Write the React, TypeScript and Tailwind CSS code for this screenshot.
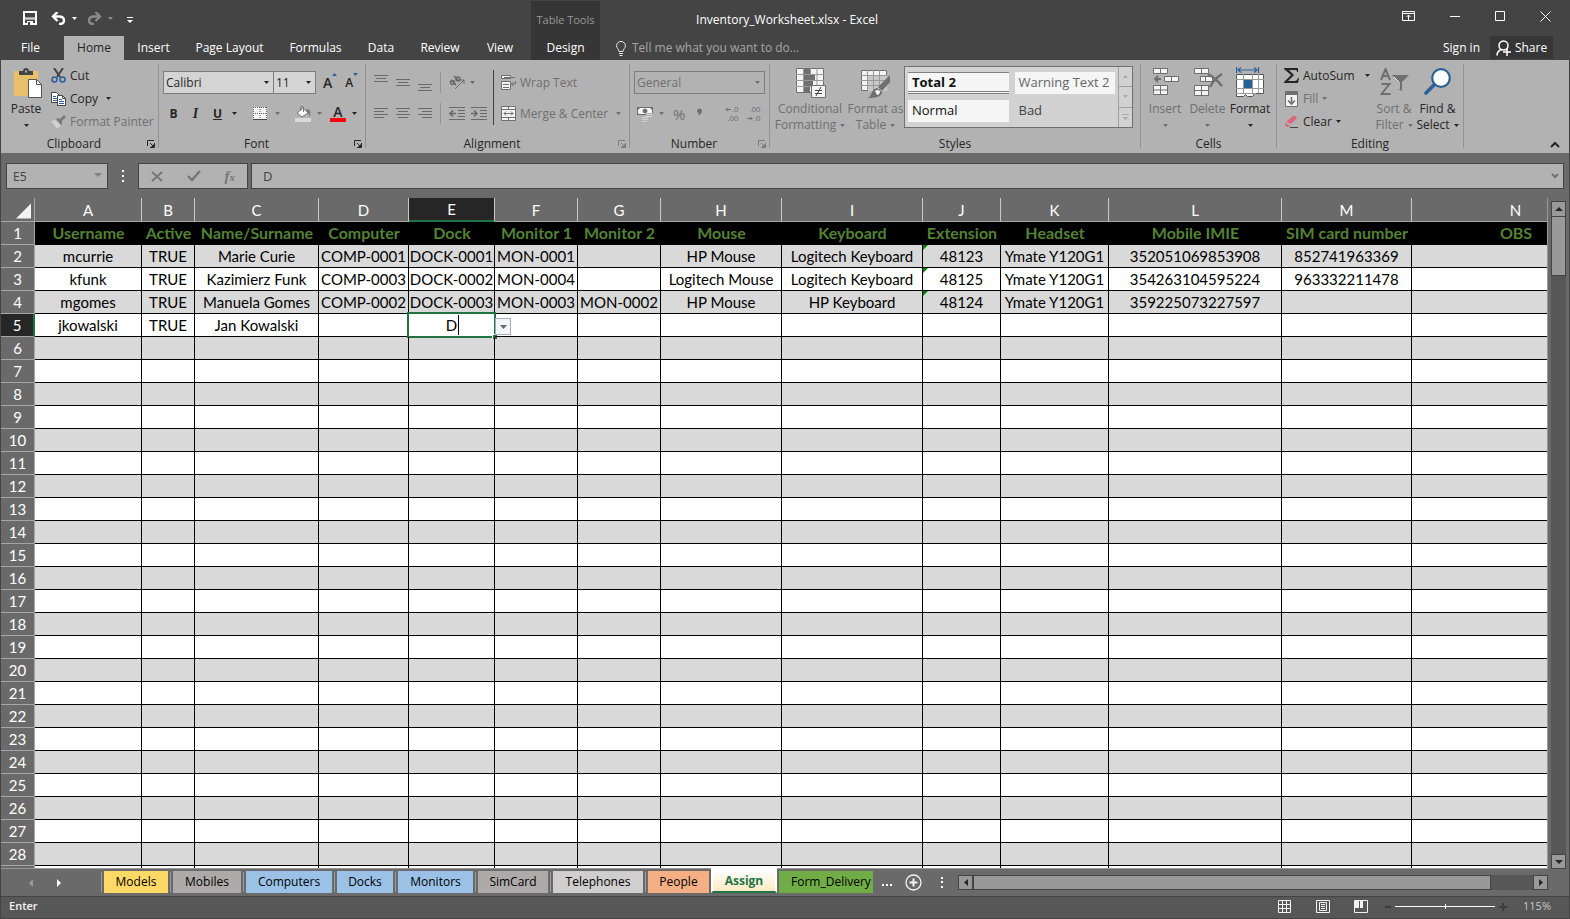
import type { ReactNode } from "react";

interface Column {
  letter: string;
  title: string;
  width: string;
}

const columns: Column[] = [
  { letter: "A", title: "Username", width: "w-[107px]" },
  { letter: "B", title: "Active", width: "w-[53px]" },
  { letter: "C", title: "Name/Surname", width: "w-[124px]" },
  { letter: "D", title: "Computer", width: "w-[90px]" },
  { letter: "E", title: "Dock", width: "w-[86px]" },
  { letter: "F", title: "Monitor 1", width: "w-[83px]" },
  { letter: "G", title: "Monitor 2", width: "w-[83px]" },
  { letter: "H", title: "Mouse", width: "w-[121px]" },
  { letter: "I", title: "Keyboard", width: "w-[141px]" },
  { letter: "J", title: "Extension", width: "w-[78px]" },
  { letter: "K", title: "Headset", width: "w-[108px]" },
  { letter: "L", title: "Mobile IMIE", width: "w-[173px]" },
  { letter: "M", title: "SIM card number", width: "w-[130px]" },
  { letter: "N", title: "OBS", width: "w-[208px]" },
];

const people: Record<number, string[]> = {
  2: ["mcurrie", "TRUE", "Marie Curie", "COMP-0001", "DOCK-0001", "MON-0001", "", "HP Mouse", "Logitech Keyboard", "48123", "Ymate Y120G1", "352051069853908", "852741963369", ""],
  3: ["kfunk", "TRUE", "Kazimierz Funk", "COMP-0003", "DOCK-0002", "MON-0004", "", "Logitech Mouse", "Logitech Keyboard", "48125", "Ymate Y120G1", "354263104595224", "963332211478", ""],
  4: ["mgomes", "TRUE", "Manuela Gomes", "COMP-0002", "DOCK-0003", "MON-0003", "MON-0002", "HP Mouse", "HP Keyboard", "48124", "Ymate Y120G1", "359225073227597", "", ""],
  5: ["jkowalski", "TRUE", "Jan Kowalski"],
};

const LAST_ROW = 28;
// one more row than is numbered, its top edge peeks out at the bottom
const rowNumbers = Array.from({ length: LAST_ROW }, (_, i) => i + 2);

const menuTabs = [
  { name: "File", style: "w-[63px] pr-1 text-white" },
  { name: "Home", style: "w-[60px] bg-[#b2b2b2] text-[#262626]" },
  { name: "Insert", style: "w-[59px] text-white" },
  { name: "Page Layout", style: "w-[93px] text-white" },
  { name: "Formulas", style: "w-[79px] text-white" },
  { name: "Data", style: "w-[52px] text-white" },
  { name: "Review", style: "w-[66px] text-white" },
  { name: "View", style: "w-[54px] text-white" },
];

const sheets = [
  { name: "Models", style: "w-16 bg-[#ffd966]" },
  { name: "Mobiles", style: "w-[68px] bg-[#aeaaaa]" },
  { name: "Computers", style: "w-[86px] bg-[#9bc2e6]" },
  { name: "Docks", style: "w-14 bg-[#9bc2e6]" },
  { name: "Monitors", style: "w-[75px] bg-[#9bc2e6]" },
  { name: "SimCard", style: "w-[70px] bg-[#aeaaaa]" },
  { name: "Telephones", style: "w-[90px] bg-[#d0cece]" },
  { name: "People", style: "w-[61px] bg-[#f4b084]" },
];

interface IconProps {
  w: number;
  h: number;
  className?: string;
  children: ReactNode;
}

function Icon({ w, h, className = "", children }: IconProps) {
  return (
    <svg width={w} height={h} viewBox={`0 0 ${w} ${h}`} fill="none" stroke="currentColor" className={`shrink-0 ${className}`} aria-hidden="true">
      {children}
    </svg>
  );
}

function Caret({ className = "" }: { className?: string }) {
  return (
    <Icon w={5} h={3} className={className}>
      <path d="M0 0h5L2.5 3z" fill="currentColor" stroke="none" />
    </Icon>
  );
}

// horizontal strokes given as [x, y, length]
function Lines({ w, h, lines }: { w: number; h: number; lines: number[][] }) {
  return (
    <Icon w={w} h={h}>
      {lines.map(([x, y, len]) => (
        <path key={y} d={`M${x} ${y + 0.5}h${len}`} />
      ))}
    </Icon>
  );
}

function Group({ label, width, launcher, children }: { label: string; width: string; launcher?: string; children: ReactNode }) {
  return (
    <section aria-label={label} className={`flex shrink-0 ${width}`}>
      <div className="flex min-w-0 flex-1 flex-col">
        <div className="flex min-h-0 flex-1">{children}</div>
        <div className="flex h-4 shrink-0 items-center text-[#262626]">
          <span className="flex-1 text-center">{label}</span>
          {launcher && (
            <button aria-label={`${label} settings`} className={`mr-[3px] ${launcher}`}>
              <Icon w={8} h={8}>
                <path d="M.5 6V.5H7M3 3l3 3M7.5 3v4.5H3" />
                <path d="M7 4v3H4z" fill="currentColor" stroke="none" />
              </Icon>
            </button>
          )}
        </div>
      </div>
      <span className="mb-1 w-px bg-[#929292]" />
    </section>
  );
}

function Divider() {
  return <span className="h-[21px] w-px shrink-0 bg-[#929292]" />;
}

function BigButton({ width, lines, icon, enabled = false }: { width: string; lines: string[]; icon: ReactNode; enabled?: boolean }) {
  return (
    <button className={`flex shrink-0 flex-col items-center pt-1 leading-4 whitespace-nowrap ${width} ${enabled ? "text-[#262626]" : "text-[#6f6f6f]"}`}>
      <span className="flex h-[33px] items-start">{icon}</span>
      <span>{lines[0]}</span>
      <span className="flex h-4 items-center gap-1">
        {lines[1]}
        <Caret />
      </span>
    </button>
  );
}

function TitleBar() {
  return (
    <div className="flex h-9 items-center pl-[22px] text-white">
      <div className="flex flex-1 items-center">
        <button aria-label="Save">
          <Icon w={14} h={14}>
            <path d="M1 1h12v12H1z" strokeWidth="2" />
            <path d="M2 7h10M2 8h10" />
            <path d="M4 10h6v4H4z" fill="currentColor" stroke="none" />
            <path d="M5 11h2v3H5z" fill="#444" stroke="none" />
          </Icon>
        </button>
        <button aria-label="Undo" className="ml-[14px]">
          <Icon w={15} h={13}>
            <path d="M2 4.500h6c6.500 0 6.500 7.500 1 7.500H8" strokeWidth="2.400" />
            <path d="M6.500 0L2 4.500 6.500 9" strokeWidth="2.400" />
          </Icon>
        </button>
        <Caret className="ml-[6px]" />
        <button aria-label="Redo" className="ml-[10px] text-[#8a8a8a]">
          <Icon w={15} h={13}>
            <path d="M13 4.500H7c-6.500 0-6.500 7.500-1 7.500h1" strokeWidth="2.400" />
            <path d="M8.500 0L13 4.500 8.500 9" strokeWidth="2.400" />
          </Icon>
        </button>
        <Caret className="ml-[6px] text-[#8a8a8a]" />
        <button aria-label="Customize Quick Access Toolbar" className="ml-[14px] pt-1">
          <Icon w={6} h={6}>
            <path d="M0 .5h6" />
            <path d="M0 3h6L3 6z" fill="currentColor" stroke="none" />
          </Icon>
        </button>
      </div>
      <h1 className="pt-1">Inventory_Worksheet.xlsx - Excel</h1>
      <div className="flex flex-1 items-center justify-end gap-[35px] pr-[18px] pb-1">
        <button aria-label="Ribbon Display Options">
          <Icon w={13} h={10}>
            <path d="M.5.5h12v9H.5zM.5 2.500h12M6.500 4v5M4.500 6l2-2 2 2" />
          </Icon>
        </button>
        <button aria-label="Minimize">
          <Icon w={10} h={10}>
            <path d="M0 5.500h10" />
          </Icon>
        </button>
        <button aria-label="Maximize">
          <Icon w={10} h={10}>
            <path d="M.5.5h9v9h-9z" />
          </Icon>
        </button>
        <button aria-label="Close">
          <Icon w={11} h={11}>
            <path d="M.5.5l10 10M10.500.5l-10 10" />
          </Icon>
        </button>
      </div>
    </div>
  );
}

function MenuTabs() {
  return (
    <nav className="flex h-6">
      {menuTabs.map((tab) => (
        <button key={tab.name} className={`shrink-0 ${tab.style}`}>
          {tab.name}
        </button>
      ))}
      <button className="relative ml-1 w-[69px] shrink-0 bg-[#363636] text-white">
        <span className="absolute bottom-full left-0 flex h-[35px] w-full items-center justify-center bg-[#363636] pt-1 text-[11px] text-[#999]">Table Tools</span>
        Design
      </button>
      <label className="ml-4 flex flex-1 items-center gap-[6px] text-[#e6e6e6]">
        <Icon w={10} h={15}>
          <path d="M3 10.500C3 8 .6 7.500.6 4.800a4.400 4.400 0 018.800 0C9.400 7.500 7 8 7 10.500zM3 12.500h4M3.500 14.500h3" />
        </Icon>
        <input aria-label="Tell me what you want to do" placeholder="Tell me what you want to do..." className="w-48 bg-transparent outline-none placeholder:text-[#a6a6a6]" />
      </label>
      <button className="px-[10px] text-white">Sign in</button>
      <button className="mr-4 mb-px flex w-[63px] items-center justify-center gap-1 bg-[#363636] text-white">
        <Icon w={15} h={16}>
          <circle cx="7.500" cy="5.500" r="4.500" strokeWidth="1.500" />
          <path d="M1 15.500c0-3 2-5 4-6M11 8v8M7 12h8" strokeWidth="1.500" />
        </Icon>
        Share
      </button>
    </nav>
  );
}

function ClipboardGroup() {
  return (
    <Group label="Clipboard" width="w-[158px]" launcher="text-[#262626]">
      <BigButton
        width="w-[50px]"
        lines={["Paste", ""]}
        enabled
        icon={
          <Icon w={29} h={30} className="ml-1">
            <path d="M0 3h24v25H0z" fill="#e8c06c" stroke="none" />
            <path d="M5 7V3h4c0-4 6-4 6 0h4v4z" fill="#444" stroke="none" />
            <path d="M11 2.500h2v2h-2z" fill="#b2b2b2" stroke="none" />
            <path d="M14.500 11.500h8l5 5v13h-13z" fill="#fff" stroke="#555" />
            <path d="M22.500 11.500v5h5" stroke="#555" />
          </Icon>
        }
      />
      <div className="flex flex-col text-[#262626]">
        <button className="flex h-[23px] items-center gap-1">
          <Icon w={15} h={15}>
            <path d="M3 0l6 9M12 0L6 9" stroke="#444" strokeWidth="2" />
            <circle cx="3.500" cy="11.500" r="2.500" stroke="#2a6099" strokeWidth="1.500" />
            <circle cx="11.500" cy="11.500" r="2.500" stroke="#2a6099" strokeWidth="1.500" />
          </Icon>
          Cut
        </button>
        <button className="flex h-[23px] items-center gap-1">
          <Icon w={15} h={14}>
            <path d="M.5.5h5l3 3v7h-8z" fill="#fff" stroke="#444" />
            <path d="M2 4.500h3M2 6.500h4M2 8.500h4" stroke="#2a6099" />
            <path d="M6.500 3.500h5l3 3v7h-8z" fill="#fff" stroke="#444" />
            <path d="M11.500 3.500v3h3" stroke="#444" />
            <path d="M8 7.500h3M8 9.500h5M8 11.500h5" stroke="#2a6099" />
          </Icon>
          Copy
          <Caret className="ml-1" />
        </button>
        <button className="flex h-[23px] items-center gap-1 whitespace-nowrap text-[#6f6f6f]">
          <Icon w={15} h={14}>
            <path d="M0 6l4-1 6 5-4 4z" fill="#d0d0d0" stroke="none" />
            <path d="M5 4l2-1 2 1 4-4 2 2-4 4v3l-1 1z" fill="#7a7a7a" stroke="none" />
          </Icon>
          Format Painter
        </button>
      </div>
    </Group>
  );
}

function FontGroup() {
  return (
    <Group label="Font" width="w-[207px]" launcher="text-[#262626]">
      <div className="flex flex-col gap-2 pt-[7px] pl-1 text-[#262626]">
        <div className="flex h-[23px] items-center">
          <div className="relative h-[23px] w-[111px] shrink-0 border border-[#7d7d7d] bg-[#d4d4d4]">
            <select aria-label="Font" className="h-full w-full appearance-none px-[2px] outline-none">
              <option>Calibri</option>
            </select>
            <Caret className="pointer-events-none absolute top-[9px] right-1" />
          </div>
          <div className="relative h-[23px] w-[42px] shrink-0 border border-l-0 border-[#7d7d7d] bg-[#d4d4d4]">
            <select aria-label="Font size" className="h-full w-full appearance-none px-[2px] outline-none">
              <option>11</option>
            </select>
            <Caret className="pointer-events-none absolute top-[9px] right-1" />
          </div>
          <button aria-label="Increase Font Size" className="ml-[7px] flex items-start">
            <span className="text-sm leading-5 font-semibold">A</span>
            <Caret className="rotate-180 text-[#2a6099]" />
          </button>
          <button aria-label="Decrease Font Size" className="ml-2 flex items-start">
            <span className="text-xs leading-5 font-semibold">A</span>
            <Caret className="text-[#2a6099]" />
          </button>
        </div>
        <div className="flex h-[23px] items-center">
          <button className="w-[21px] font-bold">B</button>
          <button className="w-[23px] text-sm font-bold italic [font-family:'Liberation_Serif',serif]">I</button>
          <button className="w-[21px] font-bold underline">U</button>
          <Caret className="ml-1" />
          <span className="ml-2"><Divider /></span>
          <button aria-label="Borders" className="ml-2">
            <Icon w={14} h={13}>
              <path d="M0 0h14v13H0z" fill="#f4f4f4" stroke="none" />
              <path d="M0 .5h14M0 6.500h14M.5 0v12M7 0v12M13.500 0v12" stroke="#666" strokeDasharray="1 1" />
              <path d="M0 12.500h14" stroke="#444" />
            </Icon>
          </button>
          <Caret className="ml-2 text-[#6f6f6f]" />
          <span className="ml-2"><Divider /></span>
          <button aria-label="Fill Color" className="ml-[7px]">
            <Icon w={16} h={16}>
              <path d="M0 12h16v4H0z" fill="#d9d9d9" stroke="none" />
              <path d="M2 7l6-5 5 5-6 4z" fill="#fafafa" stroke="#777" />
              <path d="M5.500 5V1.500C5.500 0 8.500 0 8.500 1.500V6" stroke="#777" />
              <path d="M11 3c4 0 5 2 4 8l-2-4z" fill="#777" stroke="none" />
            </Icon>
          </button>
          <Caret className="ml-[6px] text-[#6f6f6f]" />
          <button aria-label="Font Color" className="ml-2 flex w-4 flex-col items-center">
            <span className="text-sm leading-[13px] font-semibold">A</span>
            <span className="h-1 w-full bg-[#ff0000]" />
          </button>
          <Caret className="ml-[6px]" />
        </div>
      </div>
    </Group>
  );
}

function AlignmentGroup() {
  return (
    <Group label="Alignment" width="w-[264px]" launcher="text-[#7a7a7a]">
      <div className="flex flex-col gap-2 pt-[7px] pl-2 text-[#6a6a6a]">
        <div className="flex h-[23px] items-center gap-2">
          <button aria-label="Top Align"><Lines w={14} h={20} lines={[[0, 2, 14], [2, 5, 10], [0, 8, 14]]} /></button>
          <button aria-label="Middle Align"><Lines w={14} h={20} lines={[[0, 6, 14], [2, 9, 10], [0, 12, 14]]} /></button>
          <button aria-label="Bottom Align"><Lines w={14} h={20} lines={[[0, 11, 14], [2, 14, 10], [0, 17, 14]]} /></button>
          <Divider />
          <button aria-label="Orientation" className="flex items-center gap-[5px]">
            <Icon w={16} h={15}>
              <path d="M6 14l9-9M11 5h4v4" />
              <circle cx="3.500" cy="7.500" r="2" strokeWidth="1.500" />
              <path d="M2 5l5 5M5 1l5 5" strokeWidth="1.500" />
              <circle cx="9" cy="4" r="2" strokeWidth="1.500" />
            </Icon>
            <Caret />
          </button>
        </div>
        <div className="flex h-[23px] items-center gap-2">
          <button aria-label="Align Left"><Lines w={14} h={14} lines={[[0, 1, 14], [0, 4, 10], [0, 7, 14], [0, 10, 10]]} /></button>
          <button aria-label="Center"><Lines w={14} h={14} lines={[[0, 1, 14], [2, 4, 10], [0, 7, 14], [2, 10, 10]]} /></button>
          <button aria-label="Align Right"><Lines w={14} h={14} lines={[[0, 1, 14], [4, 4, 10], [0, 7, 14], [4, 10, 10]]} /></button>
          <Divider />
          <button aria-label="Decrease Indent">
            <Icon w={16} h={13}>
              <path d="M0 .5h16M9 3.500h7M9 6.500h7M9 9.500h7M0 12.500h16" />
              <path d="M7 6.500H2M4 3.500l-3 3 3 3" strokeWidth="1.600" />
            </Icon>
          </button>
          <button aria-label="Increase Indent" className="-ml-[2px]">
            <Icon w={16} h={13}>
              <path d="M0 .5h16M9 3.500h7M9 6.500h7M9 9.500h7M0 12.500h16" />
              <path d="M0 6.500h5M3 3.500l3 3-3 3" strokeWidth="1.600" />
            </Icon>
          </button>
        </div>
      </div>
      <span className="mt-[6px] ml-[6px] h-[55px] w-px bg-[#444]" />
      <div className="flex flex-1 flex-col gap-2 pt-[7px] pl-[7px] text-[#6f6f6f]">
        <button className="flex h-[23px] items-center gap-1">
          <Icon w={15} h={15}>
            <path d="M.5.5h9v3h-9zM.5 6.500h9v8h-9z" fill="#f4f4f4" />
            <path d="M3 2.500h11M2 9.500h6M2 12.500h6M14.500 6v3h-4M12.500 7l-2 2 2 2" />
          </Icon>
          Wrap Text
        </button>
        <button className="flex h-[23px] items-center gap-1 whitespace-nowrap">
          <Icon w={15} h={15}>
            <path d="M.5.5h14v14H.5z" fill="#f4f4f4" />
            <path d="M.5 3.500h14M.5 11.500h14M7.500.5v3M7.500 11.500v3M3 7.500h9M5 5.500l-2 2 2 2M10 5.500l2 2-2 2" />
          </Icon>
          Merge &amp; Center
          <Caret className="ml-1" />
        </button>
      </div>
    </Group>
  );
}

function NumberGroup() {
  return (
    <Group label="Number" width="w-[140px]" launcher="text-[#7a7a7a]">
      <div className="flex flex-1 flex-col gap-2 pt-[7px] pl-1 text-[#6f6f6f]">
        <div className="relative h-[23px] w-[131px] border border-[#7d7d7d]">
          <select aria-label="Number Format" className="h-full w-full appearance-none px-[2px] outline-none">
            <option>General</option>
          </select>
          <Caret className="pointer-events-none absolute top-[9px] right-1" />
        </div>
        <div className="flex h-[23px] items-center pl-[3px]">
          <button aria-label="Accounting Number Format">
            <Icon w={16} h={16}>
              <path d="M.5 1.500h15v7H.5z" fill="#f4f4f4" />
              <path d="M0 1h4L0 5zM16 1h-4l4 4zM0 9V6l3 3z" fill="currentColor" stroke="none" />
              <circle cx="8" cy="5" r="2" fill="currentColor" />
              <path d="M9 7h7v3H9zM4 11h7v5H4z" fill="#b2b2b2" stroke="none" />
              <path d="M9 8.500h6M9 10.500h6M5 11.500h6M5 13.500h6M5 15.500h5" stroke="#d4d4d4" />
            </Icon>
          </button>
          <Caret className="ml-[6px]" />
          <button className="ml-[9px] text-[15px]">%</button>
          <button aria-label="Comma Style" className="ml-3">
            <Icon w={5} h={11}>
              <path d="M2.500 1a2 2 0 012 2c0 2-1 3-3 4 1-1 1-1.500 1-2a2 2 0 010-4z" fill="currentColor" />
            </Icon>
          </button>
          <span className="ml-[13px]"><Divider /></span>
          <button aria-label="Increase Decimal" className="ml-2 flex w-[15px] flex-col items-end text-[8px] leading-[9px] [font-family:'Liberation_Sans',sans-serif]">
            <span className="flex items-center">
              <Icon w={7} h={5}>
                <path d="M6 2.500H1M3 .5l-2 2 2 2" />
              </Icon>
              .0
            </span>
            <span>.00</span>
          </button>
          <button aria-label="Decrease Decimal" className="ml-[7px] flex w-[15px] flex-col items-end text-[8px] leading-[9px] [font-family:'Liberation_Sans',sans-serif]">
            <span>.00</span>
            <span className="flex items-center">
              <Icon w={7} h={5}>
                <path d="M0 2.500h5M3 .5l2 2-2 2" />
              </Icon>
              .0
            </span>
          </button>
        </div>
      </div>
    </Group>
  );
}

function StylesGroup() {
  return (
    <Group label="Styles" width="w-[371px]">
      <BigButton
        width="w-20"
        lines={["Conditional", "Formatting"]}
        icon={
          <Icon w={30} h={30} className="ml-[2px]">
            <path d="M.5.5h27v24H.5z" fill="#f4f4f4" />
            <path d="M8 1h6v5H8zM8 7h11v5H8zM8 13h9v5H8zM8 19h6v5H8z" fill="currentColor" stroke="none" />
            <path d="M7.500 0v24M21 0v24M14.500 0v6M0 6.500h28M0 12.500h28M0 18.500h28" stroke="#999" />
            <path d="M15.500 17.500h14v12h-14z" fill="#f4f4f4" />
            <path d="M19 22.500h7M19 25.500h7M25 19l-5 9" stroke="#444" />
          </Icon>
        }
      />
      <BigButton
        width="w-[51px]"
        lines={["Format as", "Table"]}
        icon={
          <Icon w={30} h={30} className="mt-px">
            <path d="M.5 1.500h25v20H.5z" fill="#f4f4f4" />
            <path d="M7 7h19v15H7z" fill="#c8c8c8" stroke="none" />
            <path d="M6.500 1v20M12.500 1v20M18.500 1v20M0 6.500h26M0 11.500h26M0 16.500h26" stroke="#999" />
            <path d="M29 6v7l-8 9-4-4z" fill="currentColor" stroke="none" />
            <path d="M16 19l5 4c0 5-8 6-14 6 4-2 3-9 9-10z" fill="currentColor" stroke="none" />
            <path d="M14 22c2-2 5-1 5 1s-2 3-3 3z" fill="#f4f4f4" stroke="none" />
          </Icon>
        }
      />
      <div className="mt-[2px] ml-[3px] flex h-[62px] w-[229px] border border-[#707070] bg-[#d2d2d2] text-[13px]">
        <div className="grid flex-1 grid-cols-2 content-start gap-x-[6px] gap-y-[6px] px-[3px] pt-[5px] text-left whitespace-nowrap">
          <button className="h-[22px] border-t border-b-3 border-double border-[#808080] bg-[#f5f5f5] px-1 text-left leading-[18px] font-bold text-[#111]">Total 2</button>
          <button className="h-[22px] bg-[#f5f5f5] px-1 text-left text-[#666]">Warning Text 2</button>
          <button className="h-[22px] bg-[#f5f5f5] px-1 text-left text-[#111]">Normal</button>
          <button className="h-[22px] px-1 text-left text-[#444]">Bad</button>
        </div>
        <div className="flex w-[14px] flex-col divide-y divide-[#a0a0a0] border-l border-[#a0a0a0] text-[#a8a8a8]">
          <button aria-label="Previous styles" className="flex flex-1 items-center justify-center"><Caret className="rotate-180" /></button>
          <button aria-label="Next styles" className="flex flex-1 items-center justify-center"><Caret /></button>
          <button aria-label="More styles" className="flex flex-1 flex-col items-center justify-center gap-[2px]">
            <span className="h-px w-[7px] bg-[#a8a8a8]" />
            <Caret />
          </button>
        </div>
      </div>
    </Group>
  );
}

function CellsGroup() {
  return (
    <Group label="Cells" width="w-[136px]">
      <BigButton
        width="w-12"
        lines={["Insert", ""]}
        icon={
          <Icon w={27} h={28} className="ml-[2px]">
            <path d="M.5.5h14v5H.5zM7.500.5v5M11.500 8.500h14v5h-14zM18.500 8.500v5M.5 17.500h14v9H.5zM7.500 17.500v9M.5 22h14" fill="#f4f4f4" />
            <path d="M8 11H2M5 8l-3 3 3 3" strokeWidth="1.800" />
          </Icon>
        }
      />
      <BigButton
        width="w-[37px]"
        lines={["Delete", ""]}
        icon={
          <Icon w={30} h={28} className="ml-[2px]">
            <path d="M.5.5h14v5H.5zM7.500.5v5M6.500 8.500h12v5h-12zM11.500 8.500v5M.5 17.500h14v10H.5zM7.500 17.500v10M.5 22.500h14" fill="#f4f4f4" />
            <path d="M14 6c5 3 10 7 14 12M28 6c-5 3-9 7-12 13" strokeWidth="2.400" />
          </Icon>
        }
      />
      <BigButton
        width="w-12"
        lines={["Format", ""]}
        enabled
        icon={
          <Icon w={28} h={31} className="-mt-px">
            <path d="M.5 0v6M22.500 0v6M2 3h19M5 .5L2 3l3 2.500M18 .5L21 3l-3 2.500" stroke="#2a6099" strokeWidth="1.200" />
            <path d="M.5 7.500h27v19h-9l-2 3h-5l-2-2-2 2h-7z" fill="#fff" stroke="#555" />
            <path d="M7.500 7v19M16.500 7v19M22.500 7v19M0 12.500h28M0 21.500h28M0 26.500h20" stroke="#999" />
            <path d="M8 13h8v8H8z" fill="#2a6099" stroke="none" />
          </Icon>
        }
      />
    </Group>
  );
}

function EditingGroup() {
  return (
    <Group label="Editing" width="w-[187px]">
      <div className="flex w-[95px] flex-col pl-[7px] text-[#262626]">
        <button className="flex h-[23px] items-center gap-1">
          <Icon w={15} h={15}>
            <path d="M0 0h14v4h-1c0-2-1-2-3-2H5l5 5-6 6h6c3 0 3-1 4-3h1l-1 5H0v-1l7-7-7-6z" fill="currentColor" stroke="none" />
          </Icon>
          AutoSum
          <Caret className="ml-[6px]" />
        </button>
        <button className="flex h-[23px] items-center gap-1 text-[#6f6f6f]">
          <Icon w={15} h={16}>
            <path d="M1.500.5h12v15h-12z" fill="#f4f4f4" />
            <path d="M1 0h13v4H1z" fill="currentColor" stroke="none" />
            <path d="M7.500 6v7M4 9.500L7.500 13 11 9.500" strokeWidth="1.600" />
          </Icon>
          Fill
          <Caret />
        </button>
        <button className="flex h-[23px] items-center gap-1">
          <Icon w={15} h={14}>
            <path d="M2 7l7-6c1-1 4 1 4 2l-6 6z" fill="#d7677f" stroke="none" />
            <path d="M1 8l5 3-1 1H3l-2-2z" fill="#d7677f" stroke="none" />
            <path d="M6 12.500h8" stroke="#444" />
          </Icon>
          Clear
          <Caret />
        </button>
      </div>
      <BigButton
        width="w-11"
        lines={["Sort &", "Filter"]}
        icon={
          <Icon w={29} h={28}>
            <path d="M1 12L5.500 1 10 12M2.500 8h6M1.500 16h8l-8 10h9" strokeWidth="2" />
            <path d="M12 7h17l-7 7v9l-4-2v-7z" fill="currentColor" stroke="none" />
            <path d="M14 9l5 5v7" stroke="#f4f4f4" />
          </Icon>
        }
      />
      <BigButton
        width="w-[43px]"
        lines={["Find &", "Select"]}
        enabled
        icon={
          <Icon w={28} h={28}>
            <circle cx="17" cy="10" r="8.800" fill="#fff" stroke="#2a6099" strokeWidth="2.200" />
            <path d="M10 17l-8 8" stroke="#2a6099" strokeWidth="3.600" strokeLinecap="round" />
          </Icon>
        }
      />
    </Group>
  );
}

function Ribbon() {
  return (
    <div className="flex h-[93px] overflow-hidden bg-[#b2b2b2] pt-1 pb-px">
      <ClipboardGroup />
      <FontGroup />
      <AlignmentGroup />
      <NumberGroup />
      <StylesGroup />
      <CellsGroup />
      <EditingGroup />
      <div className="flex flex-1 items-end justify-end pr-[9px] pb-1 text-[#262626]">
        <button aria-label="Collapse the Ribbon">
          <Icon w={10} h={7}>
            <path d="M1 6l4-4 4 4" strokeWidth="2" />
          </Icon>
        </button>
      </div>
    </div>
  );
}

function FormulaBar() {
  return (
    <div className="flex h-9 shrink-0 pt-[10px] pr-[5px] pl-[5px] text-[13px] text-[#444]">
      <div className="relative h-[26px] w-[102px] border border-[#444] bg-[#b2b2b2]">
        <input aria-label="Name Box" defaultValue="E5" className="h-full w-full px-[6px] text-xs outline-none" />
        <Icon w={8} h={4} className="pointer-events-none absolute top-[9px] right-[5px] text-[#808080]">
          <path d="M0 0h8L4 4z" fill="currentColor" stroke="none" />
        </Icon>
      </div>
      <Icon w={30} h={26}>
        <path d="M14 7h2v2h-2zM14 12h2v2h-2zM14 17h2v2h-2z" fill="#fff" stroke="none" />
      </Icon>
      <div className="flex h-[26px] w-[110px] items-center justify-between border border-[#444] bg-[#b2b2b2] px-3 text-[#777]">
        <button aria-label="Cancel">
          <Icon w={12} h={11}>
            <path d="M1 1l10 9M11 1L1 10" strokeWidth="2" />
          </Icon>
        </button>
        <button aria-label="Enter">
          <Icon w={14} h={12}>
            <path d="M1 6l4 4 8-9" strokeWidth="2.400" />
          </Icon>
        </button>
        <button aria-label="Insert Function" className="text-[15px] leading-4 font-bold italic [font-family:'Liberation_Serif',serif]">
          f<span className="text-[11px]">x</span>
        </button>
      </div>
      <div className="relative ml-[3px] h-[26px] flex-1 border border-[#444] bg-[#b2b2b2]">
        <input aria-label="Formula Bar" defaultValue="D" className="h-full w-full px-[11px] outline-none" />
        <Icon w={8} h={6} className="pointer-events-none absolute top-[9px] right-1 text-[#707070]">
          <path d="M1 1l3 3 3-3" strokeWidth="2" />
        </Icon>
      </div>
    </div>
  );
}

function ActiveCell() {
  return (
    <td className="relative border-r border-b border-black bg-white p-0">
      <input aria-label="E5" defaultValue="D" className="block h-[22px] w-full text-center text-black outline-none" />
      <span className="pointer-events-none absolute -top-[2px] -right-[2px] -bottom-[2px] -left-[2px] border-2 border-[#217346]" />
      <span className="pointer-events-none absolute top-px left-1/2 h-5 w-px translate-x-[6px] bg-black" />
      <span className="absolute -right-[3px] -bottom-[3px] size-[5px] border-t border-l border-white bg-[#217346]" />
      <button aria-label="Show list" className="absolute top-1 left-full z-10 ml-px flex h-[17px] w-4 items-center justify-center border border-[#a6adb8] bg-[#f3f5f8] text-[#666]">
        <Icon w={7} h={4}>
          <path d="M0 0h7L3.500 4z" fill="currentColor" stroke="none" />
        </Icon>
      </button>
    </td>
  );
}

function Sheet() {
  return (
    <div className="min-w-0 flex-1 overflow-hidden border-r border-b border-[#999]">
      <table className="w-[1620px] table-fixed border-separate border-spacing-0 text-center text-[15px] leading-[22px] whitespace-nowrap text-black [font-family:Lato,sans-serif]">
        <colgroup>
          <col className="w-[34px]" />
          {columns.map((col) => (
            <col key={col.letter} className={col.width} />
          ))}
          <col />
        </colgroup>
        <thead className="text-white">
          <tr className="h-6">
            <th className="border-r border-b border-[#a6a6a6] p-0">
              <Icon w={33} h={22}>
                <path d="M15 19.500L30 4.500v15z" fill="#f2f2f2" stroke="none" />
              </Icon>
            </th>
            {columns.map((col) =>
              col.letter === "E" ? (
                <th key="E" className="border-r border-b-2 border-r-[#c8c8c8] border-b-[#217346] bg-[#262626] p-0 font-normal">E</th>
              ) : (
                <th key={col.letter} className="border-r border-b border-r-[#c8c8c8] border-b-[#a6a6a6] p-0 font-normal">{col.letter}</th>
              )
            )}
          </tr>
        </thead>
        <tbody>
          <tr className="h-[23px]">
            <th className="border-r border-b border-[#a6a6a6] p-0 font-normal text-white">1</th>
            {columns.map((col) => (
              <th key={col.letter} scope="col" className="border-b border-black bg-black p-0 text-base leading-[22px] font-bold text-[#548235]">
                {col.title}
              </th>
            ))}
          </tr>
          {rowNumbers.map((n) => (
            <tr key={n} className={`h-[23px] ${n % 2 === 0 ? "bg-[#d9d9d9]" : "bg-white"}`}>
              {n === 5 ? (
                <th className="border-r-2 border-b border-r-[#217346] border-b-[#a6a6a6] bg-[#262626] p-0 font-normal text-white">5</th>
              ) : (
                <th className="border-r border-b border-[#a6a6a6] bg-[#6a6a6a] p-0 font-normal text-white">{n <= LAST_ROW ? n : null}</th>
              )}
              {columns.map((col, i) =>
                n === 5 && col.letter === "E" ? (
                  <ActiveCell key={col.letter} />
                ) : (
                  <td key={col.letter} className="relative border-r border-b border-black p-0">
                    {people[n]?.[i]}
                    {col.letter === "J" && people[n]?.[i] && (
                      <Icon w={6} h={6} className="absolute top-0 left-0">
                        <path d="M0 0h5L0 5z" fill="#008000" stroke="none" />
                      </Icon>
                    )}
                  </td>
                )
              )}
            </tr>
          ))}
        </tbody>
      </table>
    </div>
  );
}

function VerticalScroll() {
  return (
    <div className="flex w-[21px] shrink-0 flex-col pt-[3px] pr-[3px] pl-[3px] text-[#262626]">
      <button aria-label="Scroll up" className="flex h-4 items-center justify-center border border-[#444] bg-[#999]">
        <Icon w={8} h={4}>
          <path d="M0 4h8L4 0z" fill="currentColor" stroke="none" />
        </Icon>
      </button>
      <div className="flex-1 bg-[#575757]">
        <div className="h-[59px] border border-t-0 border-[#444] bg-[#999]" />
      </div>
      <button aria-label="Scroll down" className="flex h-[15px] items-center justify-center border border-[#444] bg-[#999]">
        <Icon w={8} h={4}>
          <path d="M0 0h8L4 4z" fill="currentColor" stroke="none" />
        </Icon>
      </button>
    </div>
  );
}

function SheetTabs() {
  return (
    <div className="flex h-[27px] shrink-0 pr-[21px] text-xs text-black">
      <div className="flex w-[100px] shrink-0 items-center pl-7 text-white">
        <button aria-label="Previous sheet" className="mr-6 text-[#9a9a9a]">
          <Icon w={4} h={8}>
            <path d="M4 0v8L0 4z" fill="currentColor" stroke="none" />
          </Icon>
        </button>
        <button aria-label="Next sheet">
          <Icon w={4} h={8}>
            <path d="M0 0v8l4-4z" fill="currentColor" stroke="none" />
          </Icon>
        </button>
      </div>
      {sheets.map((sheet) => (
        <div key={sheet.name} className="flex shrink-0 pt-[2px]">
          <span className="mt-px mr-[2px] h-5 w-px bg-[#999]" />
          <button className={`mr-[2px] h-[22px] ${sheet.style}`}>{sheet.name}</button>
        </div>
      ))}
      <button className="-mt-px h-[25px] w-[66px] shrink-0 border-x-2 border-t-2 border-b-2 border-x-white border-t-white border-b-[#217346] bg-linear-to-b from-white to-[#ffe9c0] font-bold text-[#217346]">
        Assign
      </button>
      <button className="mt-[2px] ml-[2px] h-[22px] w-[94px] shrink-0 overflow-hidden bg-[#70ad47] pl-3 text-left whitespace-nowrap">Form_Delivery</button>
      <button aria-label="More sheets" className="ml-[9px] text-white">
        <Icon w={11} h={20}>
          <path d="M0 11h2v2H0zM4 11h2v2H4zM8 11h2v2H8z" fill="currentColor" stroke="none" />
        </Icon>
      </button>
      <button aria-label="New sheet" className="ml-3 text-[#f2f2f2]">
        <Icon w={17} h={17}>
          <circle cx="8.500" cy="8.500" r="7.500" strokeWidth="1.300" />
          <path d="M8.500 4.500v8M4.500 8.500h8" strokeWidth="2" />
        </Icon>
      </button>
      <Icon w={2} h={27} className="ml-[19px]">
        <path d="M0 8h2v2H0zM0 12h2v2H0zM0 17h2v2H0z" fill="#fff" stroke="none" />
      </Icon>
      <div className="mt-[6px] ml-[15px] flex h-[15px] flex-1 bg-[#575757] text-[#262626]">
        <button aria-label="Scroll left" className="flex w-[15px] items-center justify-center border border-[#444] bg-[#999]">
          <Icon w={4} h={7}>
            <path d="M4 0v7L0 3.500z" fill="currentColor" stroke="none" />
          </Icon>
        </button>
        <div className="w-[518px] border border-[#444] bg-[#999]" />
        <span className="flex-1" />
        <button aria-label="Scroll right" className="flex w-[15px] items-center justify-center border border-[#444] bg-[#999]">
          <Icon w={4} h={7}>
            <path d="M0 0v7l4-3.500z" fill="currentColor" stroke="none" />
          </Icon>
        </button>
      </div>
    </div>
  );
}

function StatusBar() {
  return (
    <footer className="flex h-[22px] shrink-0 items-center border-t border-[#444] bg-[#575757] pr-[18px] pb-[2px] pl-2 text-[11px] text-[#f2f2f2]">
      <span className="flex-1 font-semibold">Enter</span>
      <button aria-label="Normal view">
        <Icon w={13} h={13}>
          <path d="M.5.5h12v12H.5zM4.500 0v13M8.500 0v13M0 4.500h13M0 8.500h13" />
        </Icon>
      </button>
      <button aria-label="Page Layout view" className="ml-[25px]">
        <Icon w={14} h={13}>
          <path d="M.5.5h13v12H.5zM3.500 2.500h7v8h-7zM5 4.500h4M5 6.500h4M5 8.500h4" />
        </Icon>
      </button>
      <button aria-label="Page Break Preview" className="ml-[24px]">
        <Icon w={14} h={13}>
          <path d="M.5.5h13v12H.5z" />
          <path d="M1 1h4v7H1zM6 1h3v7H6z" fill="currentColor" stroke="none" />
        </Icon>
      </button>
      <button aria-label="Zoom out" className="ml-[17px]">
        <Icon w={6} h={8}>
          <path d="M0 4h6" stroke="#3c3c3c" strokeWidth="2" />
        </Icon>
      </button>
      <input
        type="range"
        aria-label="Zoom"
        min={10}
        max={190}
        defaultValue={101}
        className="ml-1 h-[7px] w-[100px] appearance-none bg-[linear-gradient(#fff,#fff)] bg-[length:100%_1px] bg-center bg-no-repeat [&::-webkit-slider-thumb]:h-[5px] [&::-webkit-slider-thumb]:w-px [&::-webkit-slider-thumb]:appearance-none [&::-webkit-slider-thumb]:bg-white"
      />
      <button aria-label="Zoom in" className="ml-1">
        <Icon w={8} h={8}>
          <path d="M0 4h8M4 0v8" stroke="#3c3c3c" strokeWidth="2" />
        </Icon>
      </button>
      <button className="ml-4 w-7 text-right text-[#c8c8c8]">115%</button>
    </footer>
  );
}

export default function App() {
  return (
    <div className="flex h-screen flex-col overflow-hidden border-x border-b border-[#444] bg-[#6a6a6a] text-xs [font-family:'Open_Sans','Noto_Sans',sans-serif]">
      <header className="shrink-0 bg-[#444]">
        <TitleBar />
        <MenuTabs />
        <Ribbon />
      </header>
      <FormulaBar />
      <main className="flex min-h-0 flex-1 pt-[9px]">
        <Sheet />
        <VerticalScroll />
      </main>
      <SheetTabs />
      <StatusBar />
    </div>
  );
}
